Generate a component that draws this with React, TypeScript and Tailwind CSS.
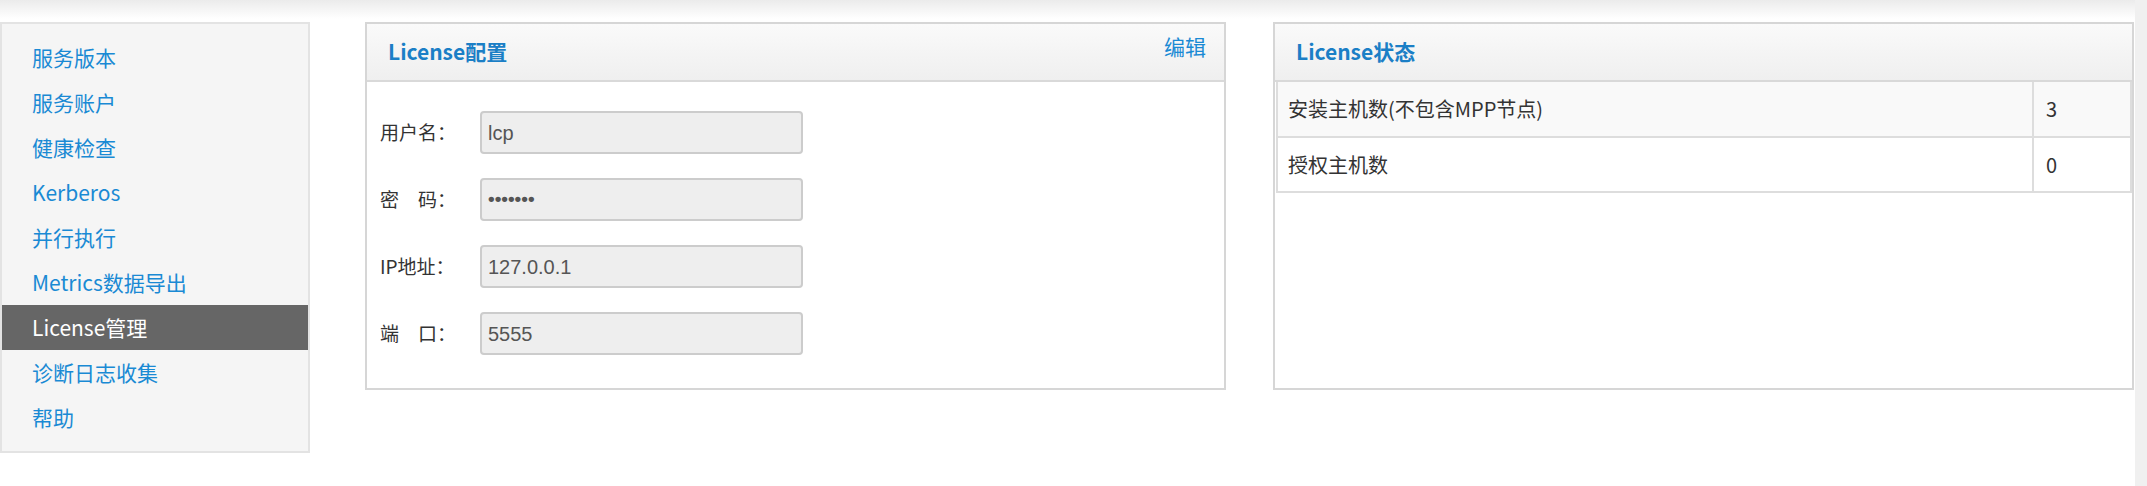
import React from "react";

const menuItems = [
  "服务版本",
  "服务账户",
  "健康检查",
  "Kerberos",
  "并行执行",
  "Metrics数据导出",
  "License管理",
  "诊断日志收集",
  "帮助",
];

const fields = [
  { label: "用户名：", value: "lcp" },
  { label: "密\u3000码：", value: "•••••••", password: true },
  { label: "IP地址：", value: "127.0.0.1" },
  { label: "端\u3000口：", value: "5555" },
];

const cjk = "font-['Microsoft_YaHei','Noto_Sans_CJK_SC','Noto_Sans',sans-serif]";

function PanelHeader({ title }: { title: string }) {
  return (
    <div className="h-[58px] flex items-center pl-[21px] bg-[linear-gradient(to_bottom,#fafafa,#efefef)] border-b-2 border-[#d9d9d9]">
      <span className="text-[21px] font-bold text-[#1b7fc6]">{title}</span>
    </div>
  );
}

export default function App() {
  const active = "License管理";

  return (
    <div className={`flex h-[486px] w-full bg-white ${cjk}`}>
      <div className="flex-1 flex flex-col">
        {/* top shadow */}
        <div className="h-[22px] bg-[linear-gradient(to_bottom,#ebebeb,#ffffff_85%)]"></div>

        <div className="flex items-start">
          {/* sidebar */}
          <div className="w-[310px] bg-[#f5f5f5] border-2 border-[#e3e3e3] py-[11px]">
            {menuItems.map((item) => (
              <div
                key={item}
                className={`h-[45px] flex items-center pl-[30px] text-[21px] ${
                  item === active ? "bg-[#666666] text-white" : "text-[#1a8ad4]"
                }`}
              >
                {item}
              </div>
            ))}
          </div>

          {/* License配置 */}
          <div className="ml-[55px] w-[861px] h-[368px] border-2 border-[#d6d6d6] relative">
            <PanelHeader title="License配置" />
            <span className="absolute top-[7px] right-[18px] text-[21px] text-[#1a8ad4]">
              编辑
            </span>
            <div className="pt-[29px] pl-[13px] flex flex-col gap-[24px]">
              {fields.map((f) => (
                <div key={f.label} className="flex items-center">
                  <span className="w-[100px] text-[19px] text-[#333333]">{f.label}</span>
                  <div className="w-[323px] h-[43px] bg-[#eeeeee] border-2 border-[#cccccc] rounded-[4px] flex items-center pl-[6px]">
                    <span
                      className={`font-['Liberation_Sans',Arial,sans-serif] text-[#555555] ${
                        f.password ? "text-[19px] font-bold" : "text-[20px]"
                      }`}
                    >
                      {f.value}
                    </span>
                  </div>
                </div>
              ))}
            </div>
          </div>

          {/* License状态 */}
          <div className="ml-[47px] w-[861px] h-[368px] border-2 border-[#d6d6d6]">
            <PanelHeader title="License状态" />
            <table className="w-[856px] border-collapse ml-px text-[20px] text-[#333333]">
              <tbody>
                <tr className="bg-[#f9f9f9]">
                  <td className="h-[55px] border-2 border-t-0 border-[#dddddd] pl-[10px]">
                    安装主机数(不包含MPP节点)
                  </td>
                  <td className="w-[98px] border-2 border-t-0 border-[#dddddd] pl-[12px]">3</td>
                </tr>
                <tr className="bg-white">
                  <td className="h-[55px] border-2 border-[#dddddd] pl-[10px]">授权主机数</td>
                  <td className="w-[98px] border-2 border-[#dddddd] pl-[12px]">0</td>
                </tr>
              </tbody>
            </table>
          </div>
        </div>
      </div>

      {/* right strip */}
      <div className="w-[12px] bg-[#f0f0f0]"></div>
    </div>
  );
}
